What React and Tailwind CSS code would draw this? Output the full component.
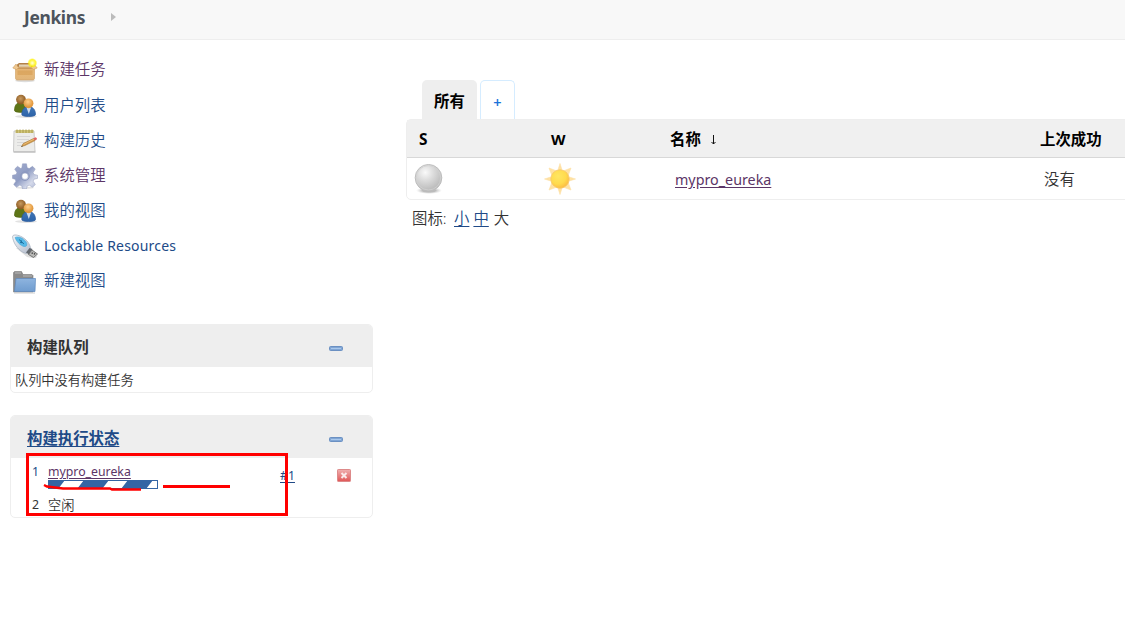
import React from "react";

function BoxIcon() {
  return (
    <svg width="26" height="26" viewBox="0 0 26 26">
      <defs>
        <linearGradient id="box" x1="0" y1="0" x2="0" y2="1"><stop offset="0" stopColor="#e3b473" /><stop offset=".5" stopColor="#e6b878" /><stop offset="1" stopColor="#e0b479" /></linearGradient>
        <radialGradient id="glow"><stop offset="0" stopColor="#fffde0" /><stop offset=".4" stopColor="#fff86a" /><stop offset=".7" stopColor="#fff200" stopOpacity=".8" /><stop offset="1" stopColor="#fff200" stopOpacity="0" /></radialGradient>
      </defs>
      <ellipse cx="13" cy="22.800" rx="10" ry="1.500" fill="#ddd" />
      <path d="M3.500 10h19v10.500L21.500 22h-17l-1-1.500z" fill="url(#box)" stroke="#cfa062" strokeWidth=".6" />
      <path d="M5 6.500L7 5h12l2 1.500v4H5z" fill="#b48148" />
      <path d="M7 6.500h12v3H7z" fill="#e3d2b4" />
      <path d="M4 6L.8 10l3.700 1.500L7 9.500h12l2.500 2 3.700-1.500L22 6l-2 3H6z" fill="#efc890" stroke="#cfa062" strokeWidth=".6" />
      <path d="M5.500 12.500h15v4.500h-15z" fill="#d39a50" opacity=".55" />
      <circle cx="20.300" cy="5" r="5" fill="url(#glow)" />
    </svg>
  );
}

function PeopleIcon() {
  return (
    <svg width="26" height="26" viewBox="0 0 26 26">
      <defs>
        <radialGradient id="headA" cx=".45" cy=".4"><stop offset="0" stopColor="#c79a60" /><stop offset="1" stopColor="#925f26" /></radialGradient>
        <radialGradient id="headB" cx=".45" cy=".35"><stop offset="0" stopColor="#ffd08c" /><stop offset="1" stopColor="#e39a40" /></radialGradient>
        <linearGradient id="blueBody" x1="0" y1="0" x2="0" y2="1"><stop offset="0" stopColor="#3f75b6" /><stop offset="1" stopColor="#2c63a8" /></linearGradient>
      </defs>
      <ellipse cx="14" cy="23.500" rx="11" ry="1.500" fill="#e2e2e2" />
      <path d="M2.500 17.500c0-5 2-8 6-8s6 3 6 8c0 2.500-12 2.500-12 0z" fill="#5e7517" stroke="#4d630e" strokeWidth=".7" />
      <circle cx="9" cy="6.600" r="4.900" fill="url(#headA)" />
      <path d="M9.800 21.500c0-5 2.700-8 6.700-8s7 3 7 8c0 2.700-13.700 2.700-13.700 0z" fill="url(#blueBody)" stroke="#2c5c9d" strokeWidth=".7" />
      <path d="M14.500 14.500l2.300 6.500 2.300-6.500z" fill="#cddbea" />
      <circle cx="16.500" cy="10.300" r="4.900" fill="url(#headB)" />
    </svg>
  );
}

function NotepadIcon() {
  return (
    <svg width="26" height="26" viewBox="0 0 26 26">
      <path d="M1.500 22.800h22v2h-22z" fill="#c4c4c4" />
      <path d="M2 3h20l1 20.500H1.500z" fill="#ececea" stroke="#c0c0c0" strokeWidth=".8" />
      <path d="M3.500 2h18v3h-18z" fill="#cfc579" />
      <path d="M5 1.500v3.500M8 1.500v3.500M11 1.500v3.500M14 1.500v3.500M17 1.500v3.500M20 1.500v3.500" stroke="#aa9b4c" strokeWidth="1" />
      <path d="M5 8.500h13M5 11.500h12M5 14.500h9M5 17.500h4" stroke="#d2d2d2" strokeWidth=".8" />
      <path d="M9.500 18.500l1.800-3L21.500 10.500l1.500 2L13 17.500z" fill="#d29a48" stroke="#a87837" strokeWidth=".6" />
      <path d="M11.500 16.500l10.500-5.300" stroke="#efc380" strokeWidth=".8" />
      <path d="M21.300 10.500l2.200-1.300q1.600.3 1.500 2l-2 1.300z" fill="#e06464" />
      <path d="M9 19l1-1.600.9 1z" fill="#555" />
    </svg>
  );
}

function GearIcon() {
  return (
    <svg width="26" height="26" viewBox="0 0 26 26">
      <defs><linearGradient id="gear" x1="0" y1="0" x2="1" y2="1"><stop offset="0" stopColor="#a4aed0" /><stop offset=".45" stopColor="#8f9cc3" /><stop offset=".75" stopColor="#d5daea" /><stop offset="1" stopColor="#aab3d1" /></linearGradient></defs>
      <ellipse cx="13" cy="24.800" rx="9" ry="1" fill="#e5e5e5" />
      <path fillRule="evenodd" d="M10.500.8h4l.7 4 2 .8 3.300-2.300 2.800 2.800-2.200 3.400.8 2 3.600.7v3.200l-3.600.8-.8 2 2.200 3.300-2.800 2.800-3.300-2.200-2 .8-.7 3h-4l-.7-3-2-.8-3.300 2.200-2.800-2.800 2.200-3.300-.8-2L.5 15.400v-3.200l3.600-.7.8-2-2.200-3.400 2.800-2.800 3.300 2.300 1-.5zM13 10a3.200 3.200 0 1 0 0 6.400 3.200 3.200 0 0 0 0-6.400z" fill="url(#gear)" stroke="#919bbd" strokeWidth=".5" />
      <circle cx="13" cy="13.200" r="4.300" fill="none" stroke="#8c98bf" strokeWidth="1" />
    </svg>
  );
}

function UsbIcon() {
  return (
    <svg width="26" height="26" viewBox="0 0 26 26">
      <defs><linearGradient id="usb" x1="0" y1="0" x2="1" y2="1"><stop offset="0" stopColor="#f4f7fa" /><stop offset="1" stopColor="#b4bccb" /></linearGradient></defs>
      <path d="M4 14l11 9 5 1h4l1-2-9-8z" fill="#e0e0e0" />
      <path d="M.8 2C1.500.3 6 .8 10 3c4 2.200 6.800 5.500 8 9l.5 2.500-4 5C9 18.500 4 13 2 8 1 5.500.3 3 .8 2z" fill="url(#usb)" stroke="#a7b2c1" strokeWidth=".8" />
      <path d="M3 3.500c3-1.700 8.500.5 11 4.300 1.500 2.500 1 4.300-.7 4.700-2.800.6-8.300-3.500-10.300-9z" fill="#55b9e8" stroke="#3a9dce" strokeWidth=".5" />
      <path d="M7 5.500l5 4.500M9 6l.5 2.500M8 8.500l2.500.2" stroke="#176693" strokeWidth=".8" fill="none" />
      <path d="M14 18.500l3.500-4.500 3 1-3.500 5.500z" fill="#62686f" />
      <path d="M16.500 20.500l3.500-4.500 5.500 4-4 3.500z" fill="#b9b9b7" stroke="#61615f" strokeWidth=".8" />
      <path d="M19.700 18.800l1 .8M22 19.500l1 .8" stroke="#333" strokeWidth="1.300" />
    </svg>
  );
}

function FolderIcon() {
  return (
    <svg width="26" height="26" viewBox="0 0 26 26">
      <defs><linearGradient id="folder" x1="0" y1="0" x2="0" y2="1"><stop offset="0" stopColor="#8eb4df" /><stop offset="1" stopColor="#6f9ccf" /></linearGradient></defs>
      <path d="M1.500 23V3.500l1-1h7l1.500 3h9l1 1V23z" fill="#8a8a8a" stroke="#7c7c7c" strokeWidth=".6" />
      <path d="M3 4h6M11 7h9" stroke="#b8b8b8" />
      <path d="M4 9.500h19.500l-.5 13H2.500z" fill="url(#folder)" stroke="#5e8abf" strokeWidth=".7" />
      <path d="M2 24h21" stroke="#c0c0c0" strokeWidth=".8" />
    </svg>
  );
}

function BallIcon() {
  return (
    <svg width="32" height="32" viewBox="0 0 32 32">
      <defs>
        <radialGradient id="ball" cx=".38" cy=".3" r=".7"><stop offset="0" stopColor="#fafafa" /><stop offset=".4" stopColor="#dedede" /><stop offset="1" stopColor="#b9b9b9" /></radialGradient>
        <radialGradient id="ballShadow"><stop offset=".5" stopColor="#bbb" /><stop offset="1" stopColor="#ddd" stopOpacity="0" /></radialGradient>
      </defs>
      <ellipse cx="16" cy="27.500" rx="13" ry="3.500" fill="url(#ballShadow)" />
      <circle cx="15.500" cy="14.800" r="13.300" fill="url(#ball)" stroke="#bdbdbd" strokeWidth="1" />
      <circle cx="15.500" cy="14.800" r="12.200" fill="none" stroke="#d2d2d2" strokeWidth=".8" />
    </svg>
  );
}

function SunIcon() {
  return (
    <svg width="32" height="32" viewBox="0 0 32 32">
      <defs><radialGradient id="sun" cx=".4" cy=".35" r=".7"><stop offset="0" stopColor="#ffe662" /><stop offset=".6" stopColor="#ffdb4e" /><stop offset="1" stopColor="#fcb840" /></radialGradient></defs>
      <path d="M16 .5l2.700 8.500h-5.400zM31.500 16L23 18.700v-5.400zM16 31.500L13.300 23h5.400zM.5 16L9 13.300v5.400zM27 5L24 13l-5-5zM27 27L19 24l5-5zM5 27L8 19l5 5zM5 5L13 8l-5 5z" fill="#ffe2a3" stroke="#fddfa5" strokeWidth=".6" />
      <circle cx="16" cy="16" r="9.200" fill="url(#sun)" stroke="#f8c868" strokeWidth=".8" />
    </svg>
  );
}

function CollapseIcon() {
  return (
    <svg className="mt-[1px]" width="14" height="5" viewBox="0 0 14 5">
      <rect x=".5" y=".5" width="13" height="4" rx="1" fill="#81a6d5" stroke="#6b90c2" />
      <path d="M2 2.500h10" stroke="#a9c8ec" />
    </svg>
  );
}

const tasks = [
  { label: "新建任务", Icon: BoxIcon, tone: "text-[#5c3566]", text: "pb-[1px] font-[350]" },
  { label: "用户列表", Icon: PeopleIcon, tone: "text-[#204a87]", text: "font-[350]" },
  { label: "构建历史", Icon: NotepadIcon, tone: "text-[#204a87]", text: "font-[350]" },
  { label: "系统管理", Icon: GearIcon, tone: "text-[#5c3566]", text: "font-[350]" },
  { label: "我的视图", Icon: PeopleIcon, tone: "text-[#204a87]", text: "font-[350]" },
  { label: "Lockable Resources", Icon: UsbIcon, tone: "text-[#204a87]", text: "pb-[2px] font-normal text-[14px] tracking-[0.180px]" },
  { label: "新建视图", Icon: FolderIcon, tone: "text-[#204a87]", text: "pb-[1px] font-[350]" },
];

function SidePanel({ title, linked, children, className }) {
  return (
    <section className={`w-[363px] overflow-hidden rounded-[5px] border border-[#eeeeee] ${className}`}>
      <header className="flex h-[42px] items-center justify-between bg-[#eeeeee] pt-[3px] pr-[29px] pl-[16px]">
        <h2 className={linked ? "text-[15.400px] font-bold leading-[20px] text-[#204a87] underline underline-offset-2" : "text-[15.400px] font-bold leading-[20px] text-[#333]"}>{title}</h2>
        <CollapseIcon />
      </header>
      {children}
    </section>
  );
}

export default function App() {
  return (
    <div className="h-[618px] w-[1125px] overflow-hidden bg-white font-['Noto_Sans','Noto_Sans_CJK_SC',sans-serif] text-[15.400px] leading-[20px] text-[#333]">
      <header className="flex h-[40px] items-center border-b border-[#eeeeee] bg-[#f8f8f8] pb-[5px] pl-[24px]">
        <span className="w-[87px] text-[17.400px] font-bold leading-[24px] tracking-[-0.350px] text-[#4d545d]">Jenkins</span>
        <svg width="6" height="10" viewBox="0 0 6 10"><path d="M0 1l5 4-5 4z" fill="#bbb" /></svg>
      </header>
      <div className="flex">
        <aside className="w-[406px] shrink-0 pt-[13px] pl-[10px]">
          <nav className="h-[271px]">
            {tasks.map(({ label, Icon, tone, text }) => (
              <a key={label} className={`flex h-[35.200px] items-center gap-[6px] pl-[2px] ${tone}`}>
                <Icon />
                <span className={`whitespace-nowrap ${text}`}>{label}</span>
              </a>
            ))}
          </nav>
          <SidePanel title="构建队列" className="h-[69px]">
            <p className="pt-[3px] pl-[4px] text-[13.200px] font-[350]">队列中没有构建任务</p>
          </SidePanel>
          <div className="relative mt-[22px]">
            <SidePanel title="构建执行状态" linked className="h-[103px]">
              <div className="flex h-[37px] pl-[21px] text-[12.300px]">
                <span className="w-[16px] pt-[4px] text-[#204a87]">1</span>
                <div className="w-[232px] pt-[4px]">
                  <a className="block h-[18px] leading-[20px] text-[#5c3566] underline underline-offset-2">mypro_eureka</a>
                  <svg width="110" height="9" viewBox="0 0 110 9">
                    <rect x=".5" y=".5" width="109" height="8" fill="#fff" stroke="#3465a4" />
                    <path d="M0 0h17l-7 9H0zM36 0h25l-7 9H29zM80 0h25l-7 9H73z" fill="#3465a4" />
                  </svg>
                </div>
                <a className="w-[57px] pt-[8px] text-[#204a87] underline underline-offset-2">#1</a>
                <svg className="mt-[11px]" width="14" height="13" viewBox="0 0 14 13">
                  <defs><linearGradient id="stop" x1="0" y1="0" x2="0" y2="1"><stop offset="0" stopColor="#f0b0b0" /><stop offset="1" stopColor="#e05656" /></linearGradient></defs>
                  <rect x=".5" y=".5" width="13" height="12" rx=".7" fill="url(#stop)" stroke="#dd8a8a" />
                  <path d="M4.500 4l5 5M9.500 4l-5 5" stroke="#fbeaea" strokeWidth="2" />
                </svg>
              </div>
              <div className="flex pl-[21px] text-[13.200px]">
                <span className="w-[16px] text-[12.300px]">2</span><span className="font-[350]">空闲</span>
              </div>
            </SidePanel>
            <svg className="pointer-events-none absolute top-[38px] left-[16px]" width="262" height="63" viewBox="0 0 262 63" fill="none" stroke="#f00" strokeWidth="3">
              <path d="M1.500 1.500h259v60H1.500z" />
              <path d="M18 32l3 1.500 16 2h47l2 1h29" strokeWidth="2.500" />
              <path d="M137 33.500h67" />
            </svg>
          </div>
        </aside>
        <main className="w-[719px] overflow-hidden pt-[40px]">
          <div className="flex h-[39px] gap-[3px] pl-[16px]">
            <div className="w-[55px] rounded-t-[5px] bg-[#eeeeee] pt-[12px] text-center font-bold text-black">所有</div>
            <div className="w-[35px] rounded-t-[5px] border border-b-0 border-[#d5ecff] pt-[11px] text-center text-[14.500px] font-semibold leading-[20px] text-[#1a73d9]">+</div>
          </div>
          <table className="w-[800px] table-fixed border-separate border-spacing-0 rounded-[5px] border border-[#eeeeee] text-left">
            <colgroup><col className="w-[131px]" /><col className="w-[124px]" /><col className="w-[370px]" /><col /></colgroup>
            <thead className="bg-[#f0f0f0] text-black">
              <tr className="h-[38px]">
                <th className="border-b border-[#d8d8d8] p-0 pt-[2px] pl-[12px] text-[15.400px]">S</th>
                <th className="border-b border-[#d8d8d8] p-0 pl-[13px] text-[15px]">W</th>
                <th className="border-b border-[#d8d8d8] p-0 pt-[2px] pl-[8px]">
                  <div className="flex items-center gap-[9px]">名称<svg width="7" height="10" viewBox="0 0 7 10" fill="none" stroke="#111"><path d="M3.500 0v9M1.500 7L3.500 9 5.500 7" /></svg></div>
                </th>
                <th className="border-b border-[#d8d8d8] p-0 pt-[2px] pl-[8px]">上次成功</th>
              </tr>
            </thead>
            <tbody>
              <tr className="h-[41px]">
                <td className="p-0 pl-[6px]"><BallIcon /></td>
                <td className="p-0 pl-[6px]"><SunIcon /></td>
                <td className="p-0 pt-[2px] pl-[13px]"><a className="text-[14.300px] text-[#5c3566] underline underline-offset-2">mypro_eureka</a></td>
                <td className="p-0 pt-[2px] pl-[12px] font-[350]">没有</td>
              </tr>
            </tbody>
          </table>
          <div className="flex pt-[9px] pl-[6px] font-[350]">
            <span className="w-[42px]">图标:</span>
            <a className="mr-[4px] text-[#204a87] underline underline-offset-2">小</a>
            <a className="mr-[5px] text-[#204a87] underline underline-offset-2">中</a>
            <span>大</span>
          </div>
        </main>
      </div>
    </div>
  );
}
